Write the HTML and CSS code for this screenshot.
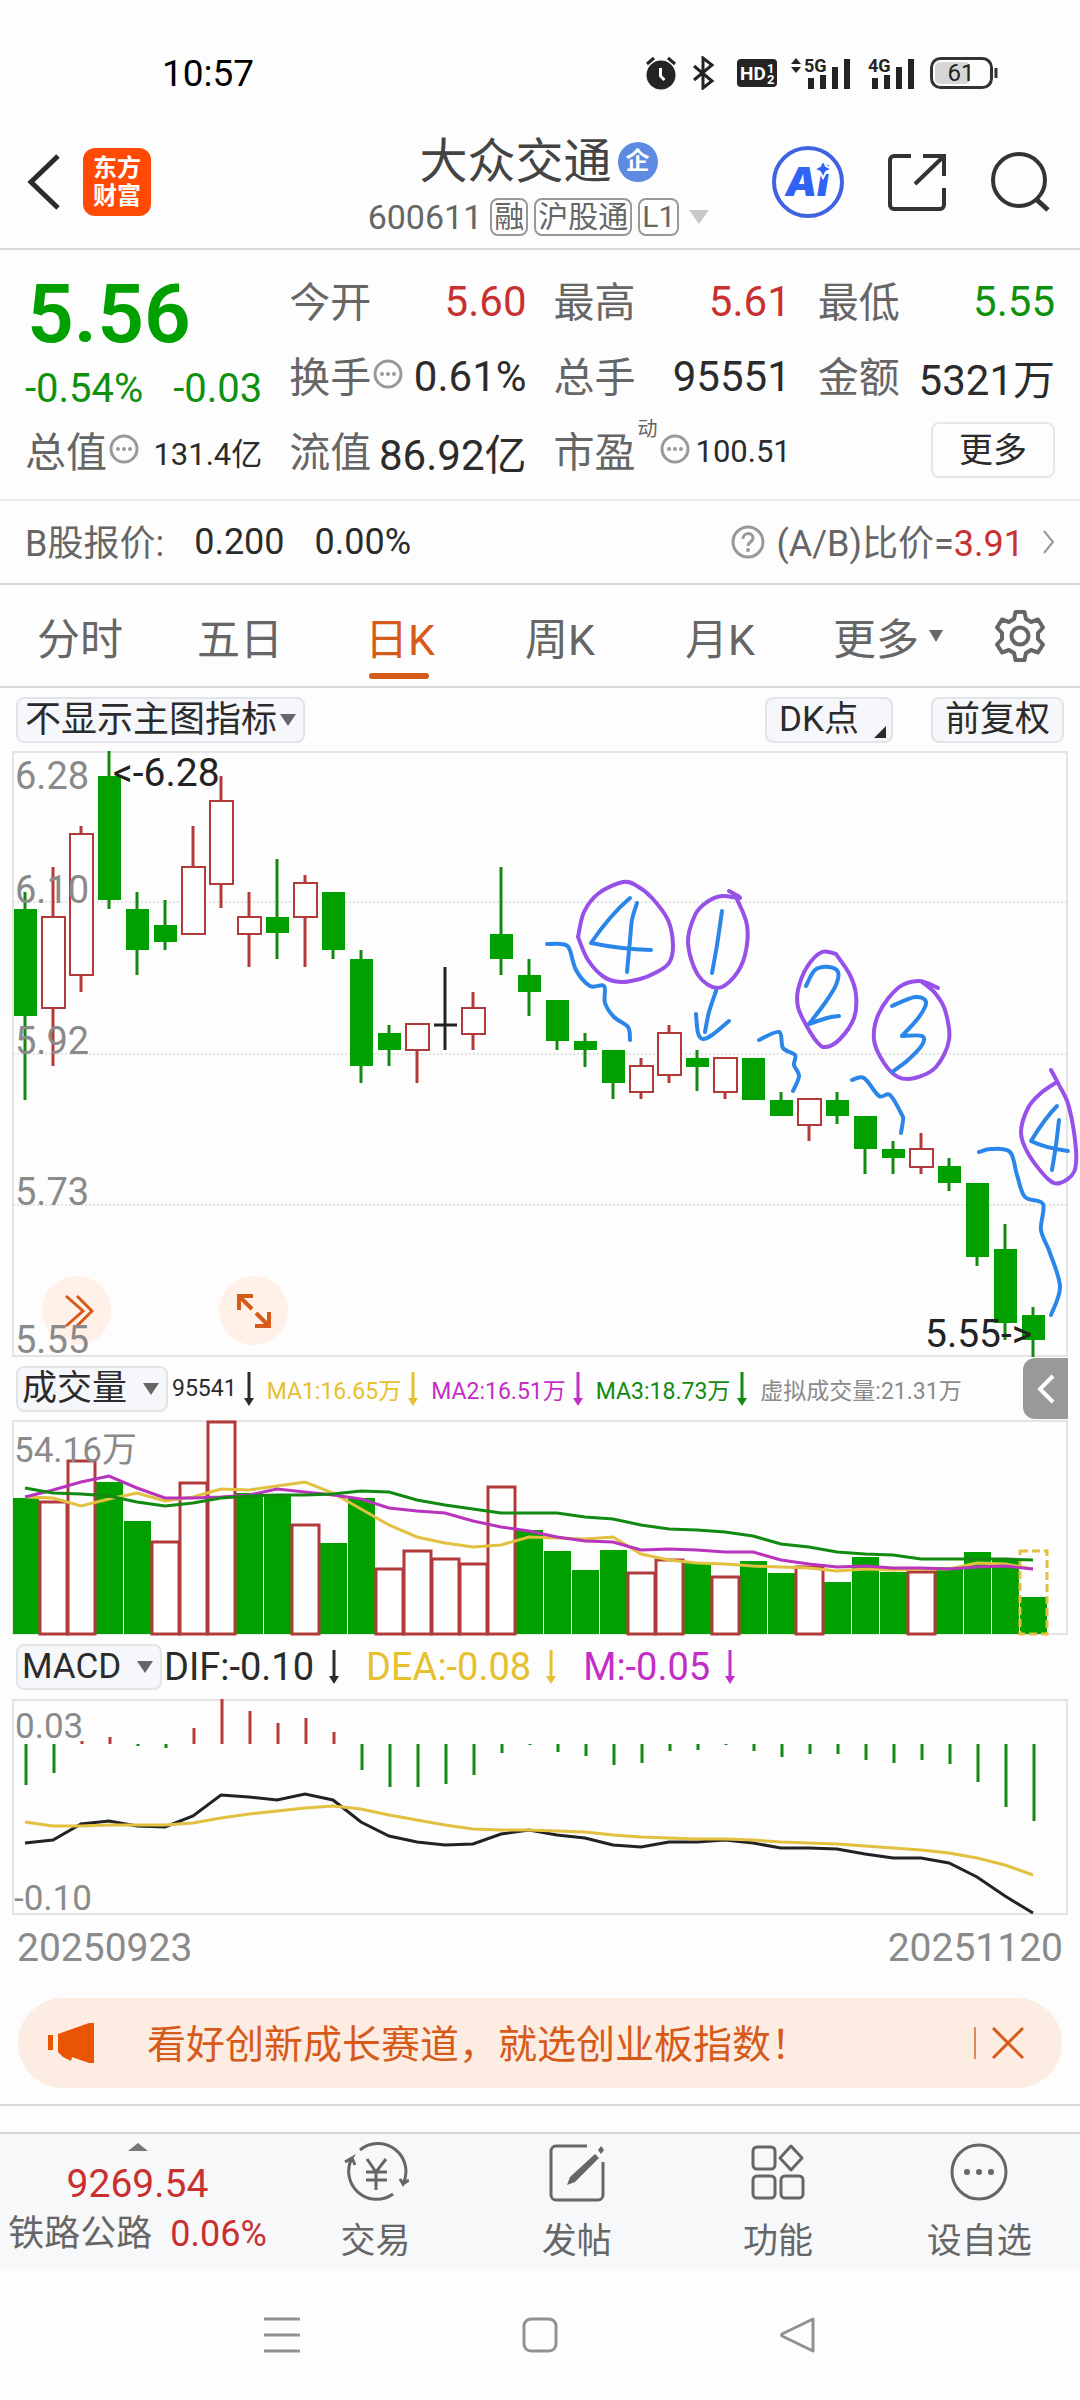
FILE: index.html
```html
<!DOCTYPE html>
<html lang="zh-CN">
<head>
<meta charset="utf-8">
<meta name="viewport" content="width=device-width, initial-scale=1">
<title>大众交通 600611</title>
<link rel="stylesheet" href="styles.css">
</head>
<body>
<div class="status">
  <time class="clock">10:57</time>
  <div class="status-icons">
    <svg class="i-alarm" viewBox="0 0 32 34" width="32" height="34"><circle cx="16" cy="19" r="14.500" fill="#242424"/><path d="M2 8 9 2M30 8 23 2" stroke="#242424" stroke-width="3"/><path d="M15.500 12v8l4 4" fill="none" stroke="#fff" stroke-width="3"/></svg>
    <svg class="i-bt" viewBox="0 0 24 34" width="24" height="34"><path d="M2 10 20 25 11 32V2l9 7L2 24" fill="none" stroke="#242424" stroke-width="3"/></svg>
    <svg class="i-hd" viewBox="0 0 40 28" width="40" height="28"><rect width="40" height="28" rx="4" fill="#242424"/><g fill="#fff" font-weight="700"><text x="3" y="21" font-size="19">HD</text><text x="30" y="14" font-size="13">1</text><text x="30" y="25" font-size="13">2</text></g></svg>
    <svg class="i-sig" viewBox="0 0 62 38" width="62" height="38"><path d="m0 10 5-6 5 6zM0 13l5 6 5-6z" fill="#242424"/><text x="13" y="18" font-size="18" font-weight="700" fill="#242424">5G</text><path d="M20 24v11M32 21v14M44 13v22M56 5v30" stroke="#242424" stroke-width="6"/></svg>
    <svg class="i-sig2" viewBox="0 0 47 38" width="47" height="38"><text x="0" y="18" font-size="18" font-weight="700" fill="#242424">4G</text><path d="M7 24v11M19 21v14M31 13v22M43 5v30" stroke="#242424" stroke-width="6"/></svg>
    <svg class="i-bat" viewBox="0 0 68 32" width="68" height="32"><rect x="5" y="5" width="35" height="22" rx="5" fill="#d6d6d6"/><rect x="1.500" y="1.500" width="60" height="29" rx="9" fill="none" stroke="#333" stroke-width="3"/><path d="M66 11v10" stroke="#333" stroke-width="3"/><text x="31" y="24" font-size="24" text-anchor="middle" fill="#242424">61</text></svg>
  </div>
</div>

<header class="header">
  <div class="header-left">
    <button class="bare" aria-label="返回"><svg viewBox="0 0 34 56" width="34" height="56"><path d="M31 2 4 28l27 26" fill="none" stroke="#2b2b2b" stroke-width="5"/></svg></button>
    <a class="logo" href="#home">东方<br>财富</a>
  </div>
  <div class="title-box">
    <h1 class="title">大众交通<span class="qi">企</span></h1>
    <div class="code"><span class="code-num">600611</span><span class="tag">融</span><span class="tag">沪股通</span><span class="tag">L1</span><span class="tri tri-light"></span></div>
  </div>
  <div class="header-right">
    <button class="bare"><svg viewBox="0 0 72 72" width="72" height="72"><circle cx="36" cy="36" r="34" fill="#fff" stroke="#3f63e0" stroke-width="4"/><text class="ai" x="35" y="50" text-anchor="middle">Ai</text><path d="m51 14 3 6 6 3-6 3-3 6-3-6-6-3 6-3z" fill="#2f62f5" stroke="#fff" stroke-width="2"/></svg></button>
    <button class="bare" aria-label="分享"><svg viewBox="0 0 58 58" width="58" height="58"><path d="M23 3H6a4 4 0 0 0-4 4v45a4 4 0 0 0 4 4h46a4 4 0 0 0 4-4V35M35 3h21v20M55 4 27 31" fill="none" stroke="#333" stroke-width="4"/></svg></button>
    <button class="bare" aria-label="搜索"><svg viewBox="0 0 60 60" width="60" height="60"><circle cx="29" cy="28" r="26" fill="none" stroke="#333" stroke-width="4"/><path d="m46 47 12 11" stroke="#333" stroke-width="5"/></svg></button>
  </div>
</header>

<main>
<section class="quote">
  <div class="price-box">
    <strong class="price">5.56</strong>
    <div class="change"><span>-0.54%</span><span>-0.03</span></div>
  </div>
  <div class="cell"><span class="k">今开</span><span class="v up">5.60</span></div>
  <div class="cell"><span class="k">最高</span><span class="v up">5.61</span></div>
  <div class="cell"><span class="k">最低</span><span class="v down">5.55</span></div>
  <div class="cell"><span class="k">换手<svg class="dots" viewBox="0 0 30 30"><use href="#dots"/></svg></span><span class="v">0.61%</span></div>
  <div class="cell"><span class="k">总手</span><span class="v">95551</span></div>
  <div class="cell"><span class="k">金额</span><span class="v">5321万</span></div>
  <div class="cell"><span class="k">总值<svg class="dots" viewBox="0 0 30 30"><use href="#dots"/></svg></span><span class="v small">131.4亿</span></div>
  <div class="cell"><span class="k">流值</span><span class="v">86.92亿</span></div>
  <div class="cell"><span class="k">市盈<sup>动</sup><svg class="dots" viewBox="0 0 30 30"><use href="#dots"/></svg></span><span class="v small">100.51</span></div>
  <div class="cell cell-end"><button class="more">更多</button></div>
</section>

<section class="bshare">
  <span class="k2">B股报价:</span><span>0.200</span><span>0.00%</span>
  <a class="ratio" href="#ratio"><svg viewBox="0 0 34 34" width="34" height="34"><circle cx="17" cy="17" r="15" fill="none" stroke="#999" stroke-width="3"/><path d="M12 14c0-7 10-7 10-1 0 4-5 4-5 8" fill="none" stroke="#999" stroke-width="3"/><circle cx="17" cy="25" r="2" fill="#999"/></svg><span class="ratio-text">(A/B)比价=<b class="up">3.91</b></span><svg viewBox="0 0 12 24" width="12" height="24"><path d="m1 1 9 11-9 11" fill="none" stroke="#999" stroke-width="2"/></svg></a>
</section>

<nav class="tabs">
  <button class="tab">分时</button>
  <button class="tab">五日</button>
  <button class="tab active">日K</button>
  <button class="tab">周K</button>
  <button class="tab">月K</button>
  <button class="tab tab-more">更多<span class="tri"></span></button>
  <button class="gear" aria-label="设置"><svg viewBox="0 0 52 52" width="52" height="52"><path d="M21.500 2h9l1.500 7 5 3 7-2.500 5 8L44 23v6l5 5.500-5 8-7-2.500-5 3-1.500 7h-9L20 43l-5-3-7 2.500-5-8L8 29v-6l-5-5.500 5-8 7 2.500 5-3z" fill="none" stroke="#666" stroke-width="4" stroke-linejoin="round"/><circle cx="26" cy="26" r="8.500" fill="none" stroke="#666" stroke-width="4"/></svg></button>
</nav>

<section class="charts">
  <div class="chart-bar chart-tools">
    <span class="chip chip-tight"><select aria-label="主图指标"><option>不显示主图指标</option></select></span>
    <span class="spacer"></span>
    <button class="chip-btn dk">DK点</button>
    <button class="chip-btn">前复权</button>
  </div>
  <div class="kline">
    <button class="round round-a" aria-label="展开"><svg viewBox="0 0 30 34" width="30" height="34"><path d="m2 2 17 15L2 32M13 2l15 15-15 15" fill="none" stroke="#d65a1a" stroke-width="3"/></svg></button>
    <button class="round round-b" aria-label="全屏"><svg viewBox="0 0 34 34" width="34" height="34"><path d="M2 16V2h14M2 2l13 13M32 18v14H18M32 32 19 19" fill="none" stroke="#d65a1a" stroke-width="4"/></svg></button>
    <svg id="kline" class="chart" viewBox="0 751 1080 606"></svg>
  </div>
  <div class="chart-bar vol-bar">
    <span class="chip"><select aria-label="副图指标一"><option>成交量</option></select></span>
    <ul class="vals vals-small">
      <li>95541<svg class="arr"><use href="#arr"/></svg></li>
      <li class="gold">MA1:16.65万<svg class="arr"><use href="#arr"/></svg></li>
      <li class="purple">MA2:16.51万<svg class="arr"><use href="#arr"/></svg></li>
      <li class="green">MA3:18.73万<svg class="arr"><use href="#arr"/></svg></li>
      <li class="grey">虚拟成交量:21.31万</li>
    </ul>
    <button class="fold" aria-label="收起"><svg viewBox="0 0 18 30" width="18" height="30"><path d="M16 2 3 15l13 13" fill="none" stroke="#fff" stroke-width="4"/></svg></button>
  </div>
  <svg id="volume" class="chart" viewBox="0 1420 1080 215"></svg>
  <div class="chart-bar macd-bar">
    <span class="chip"><select aria-label="副图指标二"><option>MACD</option></select></span>
    <ul class="vals vals-large">
      <li>DIF:-0.10<svg class="arr"><use href="#arr"/></svg></li>
      <li class="gold">DEA:-0.08<svg class="arr"><use href="#arr"/></svg></li>
      <li class="purple">M:-0.05<svg class="arr"><use href="#arr"/></svg></li>
    </ul>
  </div>
  <svg id="macd" class="chart" viewBox="0 1699 1080 216"></svg>
  <div class="dates"><time>20250923</time><time>20251120</time></div>
</section>

<aside class="banner">
  <svg viewBox="0 0 46 40" width="46" height="40"><path d="M10 11 41 0h5v40h-5l-17-6-1 4-8-4-5-5zM0 12h5v15H0z" fill="#ea5504"/></svg>
  <a href="#promo">看好创新成长赛道，就选创业板指数！</a>
  <button class="bare close" aria-label="关闭"><svg viewBox="0 0 32 32" width="32" height="32"><path d="m1 1 30 30M31 1 1 31" stroke="#d65a1a" stroke-width="3"/></svg></button>
</aside>
</main>

<footer class="bottom">
  <a class="index" href="#index"><span class="tri-up"></span><span class="index-num">9269.54</span><span class="index-row"><span>铁路公路</span><span class="up">0.06%</span></span></a>
  <a class="item" href="#trade"><svg viewBox="0 0 66 60" width="66" height="60" fill="none" stroke="#666" stroke-width="3"><path d="M17 8a28 28 0 0 1 43 34l-3-5m3 5 6-4M50 52A28 28 0 0 1 9 16l-7 4m7-4 3 7"/><path d="m24 17 9 13 10-13M23 30h21M23 38h21M33 30v18"/></svg><span>交易</span></a>
  <a class="item" href="#post"><svg viewBox="0 0 56 60" width="56" height="60"><path d="M38 4H7a5 5 0 0 0-5 5v44a5 5 0 0 0 5 5h42a5 5 0 0 0 5-5V20" fill="none" stroke="#666" stroke-width="3"/><path d="m46 12 4 4-24 24-8 3 3-8zM49 8l3-4 3 4-3 4z" fill="#666"/></svg><span>发帖</span></a>
  <a class="item" href="#tools"><svg viewBox="0 0 56 60" width="56" height="60" fill="none" stroke="#666" stroke-width="3"><rect x="3" y="5" width="22" height="22" rx="4"/><rect x="3" y="34" width="22" height="22" rx="4"/><rect x="31" y="34" width="22" height="22" rx="4"/><path d="m41 4 11 12-11 12-11-12z" stroke-linejoin="round"/></svg><span>功能</span></a>
  <a class="item" href="#watch"><svg viewBox="0 0 60 60" width="60" height="60"><circle cx="30" cy="30" r="27" fill="none" stroke="#666" stroke-width="3"/><g fill="#666"><circle cx="18" cy="30" r="3"/><circle cx="30" cy="30" r="3"/><circle cx="42" cy="30" r="3"/></g></svg><span>设自选</span></a>
</footer>

<div class="sysnav">
  <button class="bare" aria-label="最近任务"><svg viewBox="0 0 36 36" width="36" height="36"><path d="M0 2h36M0 18h36M0 34h36" stroke="#919191" stroke-width="3"/></svg></button>
  <button class="bare" aria-label="主屏幕"><svg viewBox="0 0 36 36" width="36" height="36"><rect x="2" y="2" width="32" height="32" rx="7" fill="none" stroke="#919191" stroke-width="3"/></svg></button>
  <button class="bare" aria-label="后退"><svg viewBox="0 0 36 36" width="36" height="36"><path d="M33 2v32L2 19q-1-1 0-2z" fill="none" stroke="#919191" stroke-width="3" stroke-linejoin="round"/></svg></button>
</div>

<svg class="defs" width="0" height="0" aria-hidden="true">
  <symbol id="dots" viewBox="0 0 30 30"><circle cx="15" cy="15" r="13" fill="none" stroke="#999" stroke-width="3"/><g fill="#999"><circle cx="9" cy="15" r="2"/><circle cx="15" cy="15" r="2"/><circle cx="21" cy="15" r="2"/></g></symbol>
  <symbol id="arr" viewBox="0 0 12 34"><path d="M6 0v30" stroke="currentColor" stroke-width="3"/><path d="m1 26 10 0-5 8z" fill="currentColor"/></symbol>
</svg>
<script src="charts.js"></script>
</body>
</html>
```
FILE: styles.css
```css
* { box-sizing: border-box; }
body {
  margin: 0;
  background: #fdfdfd;
  color: #2b2b2b;
  font-family: Roboto, "Noto Sans CJK SC", sans-serif;
  font-size: 36px;
}
button, select { font: inherit; color: inherit; margin: 0; border: 0; background: none; padding: 0; cursor: pointer; }
a { color: inherit; text-decoration: none; }
svg { display: block; flex: none; }
.defs { position: absolute; }
.up { color: #c93030; font-weight: 400; }
.down { color: #0f910f; }

.status { display: flex; justify-content: space-between; align-items: center; height: 110px; padding: 36px 82px 0 162px; }
.clock { font-size: 37px; color: #000; }
.status-icons { display: flex; align-items: center; }
.i-bt { margin-left: 15px; }
.i-hd { margin-left: 21px; }
.i-sig { margin-left: 14px; }
.i-sig2 { margin-left: 15px; }
.i-bat { margin-left: 15px; }

.header { display: grid; grid-template-columns: 1fr auto 1fr; align-items: center; height: 140px; border-bottom: 2px solid #d8d8d8; padding: 6px 30px 0 27px; }
.header-left { display: flex; align-items: center; gap: 22px; }
.logo { width: 68px; height: 68px; border-radius: 12px; background: #ff4a05; color: #fff; font-size: 24px; line-height: 28px; font-weight: 700; text-align: center; padding-top: 6px; }
.title-box { display: flex; flex-direction: column; align-items: center; padding-top: 14px; }
.title { margin: 0; display: flex; align-items: center; gap: 6px; font-size: 48px; line-height: 56px; font-weight: 400; color: #444; }
.qi { width: 40px; height: 40px; border-radius: 50%; background: #5f8ae2; color: #fff; font-size: 24px; line-height: 38px; text-align: center; font-weight: 700; }
.code { display: flex; align-items: center; gap: 6px; height: 54px; font-size: 34px; color: #666; }
.code-num { margin-right: 2px; }
.tag { border: 2px solid #999; border-radius: 8px; height: 38px; padding: 0 2px; font-size: 30px; line-height: 34px; }
.tri { display: inline-block; border: 7px solid transparent; border-top: 12px solid #666; border-bottom: 0; }
.tri-light { border-width: 14px 10px 0; border-top-color: #c8c8c8; margin-left: 4px; }
.header-right { display: flex; align-items: center; justify-content: flex-end; gap: 44px; }
.ai { font-family: Inter, Roboto, sans-serif; font-size: 40px; font-weight: 900; font-style: italic; fill: #2f62f5; }

.quote { display: grid; grid-template-columns: repeat(4, minmax(0, 1fr)); grid-auto-rows: 75px; column-gap: 27px; padding: 14px 25px 10px; border-bottom: 2px solid #ececec; font-size: 42px; }
.price-box { grid-row: span 2; color: #00a000; padding-top: 3px; }
.price { display: block; font-size: 82px; line-height: 94px; font-weight: 600; padding-left: 2px; }
.change { display: flex; justify-content: space-between; font-size: 40px; line-height: 56px; color: #0f910f; }
.cell { display: flex; justify-content: space-between; align-items: center; white-space: nowrap; }
.cell-end { justify-content: flex-end; padding-bottom: 4px; }
.k { display: flex; align-items: center; gap: 2px; color: #666; font-size: 41px; padding-bottom: 6px; }
.k sup { font-size: 20px; line-height: 20px; align-self: flex-start; color: #666; }
.dots { width: 30px; height: 30px; }
.small { font-size: 31px; }
.more { width: 124px; height: 56px; border: 2px solid #e6e7ea; border-radius: 8px; font-size: 34px; line-height: 50px; }

.bshare { display: flex; align-items: center; height: 84px; border-bottom: 2px solid #d8d8d8; padding: 0 25px; font-size: 36px; gap: 30px; }
.k2, .ratio { color: #666; }
.k2, .ratio-text { padding-bottom: 4px; }
.ratio { margin-left: auto; display: flex; align-items: center; gap: 11px; }
.ratio svg:last-child { margin-left: 8px; }

.tabs { display: grid; grid-template-columns: repeat(6, 4fr) 3fr; height: 103px; border-bottom: 2px solid #d8d8d8; }
.tab { position: relative; display: flex; align-items: center; justify-content: center; gap: 10px; font-size: 43px; color: #666; }
.tab-more { padding-left: 16px; }
.tab.active { color: #d65a1a; }
.tab.active::after { content: ""; position: absolute; left: calc(50% - 31px); bottom: 7px; width: 60px; height: 6px; border-radius: 3px; background: #d65a1a; }
.gear { display: flex; align-items: center; justify-content: center; }

.chart-bar { display: flex; align-items: center; padding: 0 12px 0 16px; height: 64px; }
.chart-tools { padding: 0 16px; height: 63px; }
.vol-bar { height: 63px; }
.spacer { flex: 1; }
.chip { position: relative; }
.chip select { appearance: none; height: 46px; padding: 0 38px 0 4px; border: 2px solid #e2e4e8; border-radius: 8px; background: #f6f7fa; font-size: 35px; line-height: 40px; }
.chip-tight select { padding: 0 25px 0 7px; font-size: 36px; }
.chip::after { content: ""; position: absolute; right: 9px; top: 17px; border: 8px solid transparent; border-top: 12px solid #666; border-bottom: 0; }
.chip-btn { height: 46px; padding: 0 12px; border: 2px solid #e2e4e8; border-radius: 8px; background: #f6f7fa; font-size: 35px; line-height: 40px; margin-left: 38px; }
.dk { position: relative; padding-right: 32px; }
.dk::after { content: ""; position: absolute; right: 5px; bottom: 3px; border-left: 12px solid transparent; border-bottom: 12px solid #2b2b2b; }
.chart { width: 100%; height: auto; overflow: visible; }
.chart .axis { font-size: 38px; fill: #8a8a8a; }
.chart .axis-small { font-size: 35px; fill: #8a8a8a; }
.chart .mark { font-size: 39px; fill: #222; }
.kline { position: relative; }
.kline .chart { position: relative; pointer-events: none; }
.round { position: absolute; bottom: 12px; width: 69px; height: 69px; border-radius: 50%; background: #fff0e8; display: flex; align-items: center; justify-content: center; }
.round-a { left: 42px; padding-left: 4px; }
.round-b { left: 219px; }
.vals { display: flex; align-items: center; list-style: none; margin: 0; padding: 0; white-space: nowrap; }
.vals li { display: flex; align-items: center; }
.arr { width: 12px; height: 34px; }
.vals-small { font-size: 23px; gap: 12px; margin-left: 4px; }
.vals-small li { gap: 6px; }
.vals-large { font-size: 38px; gap: 26px; margin-left: 2px; }
.vals-large li { gap: 14px; }
.gold { color: #e6c02e; }
.purple { color: #c22fc6; }
.green { color: #128a12; }
.grey { color: #8a8a8a; }
.fold { margin-left: auto; width: 45px; height: 61px; border-radius: 12px 0 0 12px; background: #999; display: flex; align-items: center; justify-content: center; }
.dates { display: flex; justify-content: space-between; padding: 10px 17px 0; height: 83px; font-size: 39px; line-height: 46px; color: #8a8a8a; }

.banner { display: flex; align-items: center; height: 90px; margin: 0 18px; padding: 0 38px 0 30px; border-radius: 45px; background: #fcece2; color: #d65a1a; font-size: 39px; }
.banner a { margin-left: 53px; padding-bottom: 5px; white-space: nowrap; }
.close { margin-left: auto; padding-left: 16px; border-left: 2px solid #d98a60; }
main { padding-bottom: 16px; border-bottom: 2px solid #d8d8d8; }

.bottom { display: grid; grid-template-columns: 275px repeat(4, minmax(0, 1fr)); margin-top: 26px; height: 137px; background: #f7f8fa; border-top: 2px solid #d4d6da; color: #666; }
.index { display: flex; flex-direction: column; align-items: center; padding-top: 9px; font-size: 36px; }
.tri-up { border: 10px solid transparent; border-bottom: 8px solid #777; border-top: 0; }
.index-num { margin-top: 11px; font-size: 39px; line-height: 44px; color: #c93030; }
.index-row { display: flex; gap: 18px; line-height: 56px; white-space: nowrap; }
.item { display: flex; flex-direction: column; align-items: center; padding-top: 8px; gap: 16px; font-size: 35px; line-height: 48px; }
.sysnav { display: flex; justify-content: center; gap: 222px; padding: 48px 0; height: 132px; }
```
FILE: charts.js
```js
const NS = "http://www.w3.org/2000/svg";
const GREEN = "#00a000", WICK = "#128a12", RED = "#b23a3a", GOLD = "#e2c040", PURPLE = "#b834bc";
const cx = i => 25 + 28 * i;

function add(svg, name, attrs, text) {
  const el = document.createElementNS(NS, name);
  for (const k in attrs) el.setAttribute(k, attrs[k]);
  if (text) el.textContent = text;
  svg.appendChild(el);
}
function line(svg, x1, y1, x2, y2, stroke, w = 3, more = {}) {
  add(svg, "path", { d: `M${x1} ${y1}L${x2} ${y2}`, stroke, "stroke-width": w, fill: "none", ...more });
}
function series(svg, ys, stroke) {
  add(svg, "polyline", { points: ys.map((y, i) => `${cx(i)},${y}`).join(" "), fill: "none", stroke, "stroke-width": 3 });
}
function frame(svg, y, h) {
  add(svg, "rect", { x: 13, y: y + 1, width: 1054, height: h - 2, fill: "none", stroke: "#e4e4e4", "stroke-width": 2 });
}
function label(svg, x, y, text, cls = "axis") {
  add(svg, "text", { x, y, class: cls }, text);
}
// Freehand stroke: a smooth curve through the given points
function pen(svg, pts, stroke, width = 4) {
  let d = `M${pts[0]}`;
  for (let i = 0; i < pts.length - 1; i++) {
    const p0 = pts[i - 1] || pts[i], p1 = pts[i], p2 = pts[i + 1], p3 = pts[i + 2] || p2;
    d += `C${p1[0] + (p2[0] - p0[0]) / 6} ${p1[1] + (p2[1] - p0[1]) / 6} ${p2[0] - (p3[0] - p1[0]) / 6} ${p2[1] - (p3[1] - p1[1]) / 6} ${p2}`;
  }
  add(svg, "path", { d, fill: "none", stroke, "stroke-width": width, "stroke-linecap": "round", "stroke-linejoin": "round" });
}

// Candles: kind, high, body top, body bottom, low
const candles = [
  ["g",892,909,1016,1100],["r",867,917,1008,1066],["r",826,834,975,992],["g",751,776,900,909],
  ["g",892,909,950,975],["g",900,925,942,950],["r",826,867,934,934],["r",776,801,884,908],
  ["r",892,917,934,967],["g",859,917,933,959],["r",875,883,917,967],["g",892,892,950,959],
  ["g",950,959,1066,1083],["g",1025,1033,1050,1066],["r",1024,1024,1050,1083],["k",967,1025,1025,1050],
  ["r",992,1008,1034,1050],["g",867,934,959,975],["g",959,975,992,1016],["g",1000,1000,1041,1050],
  ["g",1033,1041,1050,1067],["g",1050,1050,1083,1099],["r",1058,1066,1092,1099],["r",1025,1033,1075,1083],
  ["g",1050,1058,1067,1091],["r",1058,1058,1092,1099],["g",1058,1058,1100,1100],["g",1092,1100,1116,1116],
  ["r",1099,1099,1125,1141],["g",1092,1100,1116,1124],["g",1116,1116,1149,1174],["g",1141,1149,1158,1174],
  ["r",1133,1149,1167,1174],["g",1158,1166,1183,1191],["g",1183,1183,1257,1266],["g",1224,1249,1323,1340],
  ["g",1307,1315,1340,1357]
];

const k = document.getElementById("kline");
frame(k, 751, 606);
[902, 1054, 1205].forEach(y => line(k, 13, y, 1067, y, "#c8c8c8", 1, { "stroke-dasharray": "2 2" }));
[["6.28", 789], ["6.10", 903], ["5.92", 1054], ["5.73", 1205], ["5.55", 1353]].forEach(([t, y]) => label(k, 15, y, t));
candles.forEach(([kind, hi, top, bot, lo], i) => {
  const x = cx(i);
  if (kind === "k") {
    line(k, x, hi, x, lo, "#222");
    line(k, x - 11, top, x + 12, top, "#222");
  } else if (kind === "g") {
    line(k, x, hi, x, lo, WICK);
    add(k, "rect", { x: x - 11, y: top, width: 23, height: bot - top, fill: GREEN });
  } else {
    line(k, x, hi, x, top, RED);
    line(k, x, bot, x, lo, RED);
    add(k, "rect", { x: x - 11, y: top, width: 23, height: bot - top, fill: "#fff", stroke: RED, "stroke-width": 2 });
  }
});
[["6.10", 903], ["5.92", 1054]].forEach(([t, y]) => {
  k.lastChild.after(...[...k.querySelectorAll("text")].filter(el => el.textContent === t));
});
label(k, 113, 786, "<-6.28", "mark");
label(k, 925, 1347, "5.55->", "mark");

const BLUE = "#2b86ea", VIOLET = "#9750e8";
[
  [[578,937],[584,912],[599,893],[623,882],[637,886],[652,898],[668,920],[673,945],[669,963],[655,973],[640,979],[621,982],[604,977],[588,960],[578,937]],
  [[729,891],[740,898],[722,896],[707,902],[695,915],[688,943],[698,975],[717,988],[734,977],[745,955],[747,925],[736,897]],
  [[836,954],[822,952],[807,967],[798,990],[798,1007],[805,1023],[817,1042],[826,1047],[840,1039],[854,1018],[856,995],[850,975],[836,954]],
  [[938,988],[919,981],[898,988],[879,1013],[874,1040],[884,1063],[898,1077],[915,1078],[936,1067],[949,1040],[945,1010],[935,993],[922,982]],
  [[1051,1070],[1059,1085],[1069,1107],[1076,1150],[1074,1172],[1060,1183],[1048,1179],[1029,1155],[1021,1133],[1028,1108],[1041,1093],[1057,1082]]
].forEach(p => pen(k, p, VIOLET));
[
  [[547,944],[561,944],[569,948],[576,970],[590,986],[604,986],[605,1003],[614,1017],[628,1027],[630,1040]],
  [[637,903],[632,920],[630,940],[627,972]],
  [[722,911],[717,945],[712,973]],
  [[716,991],[709,1012],[705,1032]],
  [[696,1014],[698,1033],[703,1039],[712,1035],[729,1021]],
  [[806,986],[815,970],[829,967],[838,972],[836,985],[825,1003],[809,1024]],
  [[809,1024],[827,1018],[839,1016]],
  [[759,1040],[779,1032],[783,1048],[795,1055],[794,1065],[799,1076],[793,1091]],
  [[892,1006],[915,997],[926,1002],[919,1017],[902,1036]],
  [[902,1036],[922,1036],[922,1045],[908,1060],[892,1072]],
  [[852,1080],[864,1078],[879,1096],[890,1095],[902,1115],[903,1120],[901,1133]],
  [[1059,1120],[1056,1145],[1052,1170]],
  [[979,1152],[991,1149],[1010,1152],[1017,1175],[1025,1197],[1043,1204],[1041,1230],[1050,1253],[1060,1287],[1051,1315]]
].forEach(p => pen(k, p, BLUE));
["M630 898Q610 915 591 943Q620 949 651 950", "M1057 1106Q1045 1118 1031 1141Q1045 1148 1068 1151"].forEach(d =>
  add(k, "path", { d, fill: "none", stroke: BLUE, "stroke-width": 4, "stroke-linecap": "round", "stroke-linejoin": "round" }));

const volTops = [1498,1501,1460,1482,1521,1541,1482,1421,1493,1494,1524,1543,1498,1568,1550,1558,1563,1486,1530,1551,1570,1550,1572,1559,1563,1576,1561,1573,1566,1582,1557,1572,1571,1567,1552,1560,1597];
const volRed = new Set([1,2,5,6,7,10,13,14,15,16,17,22,23,25,28,32]);
const v = document.getElementById("volume");
frame(v, 1420, 215);
volTops.forEach((y, i) => {
  const x = Math.max(cx(i) - 13, 13);
  if (!volRed.has(i)) add(v, "rect", { x, y, width: cx(i) + 14 - x, height: 1634 - y, fill: GREEN });
});
volTops.forEach((y, i) => {
  if (volRed.has(i)) add(v, "rect", { x: cx(i) - 13, y: y + 1, width: 27, height: 1633 - y, fill: "#fff", stroke: RED, "stroke-width": 3 });
});
add(v, "rect", { x: 1020, y: 1551, width: 27, height: 83, fill: "none", stroke: GOLD, "stroke-width": 3, "stroke-dasharray": "8 4" });
series(v, [1497,1498,1506,1499,1493,1501,1497,1489,1490,1486,1482,1493,1509,1525,1537,1543,1547,1545,1537,1538,1539,1537,1554,1560,1563,1564,1566,1567,1568,1571,1569,1570,1569,1569,1563,1564,1569], GOLD);
series(v, [1497,1490,1482,1476,1488,1498,1498,1497,1495,1489,1492,1495,1499,1508,1511,1513,1521,1527,1531,1537,1541,1542,1550,1549,1550,1552,1552,1560,1564,1567,1566,1568,1568,1569,1567,1566,1569], PURPLE);
series(v, [1488,1493,1494,1496,1502,1506,1503,1498,1496,1495,1495,1494,1491,1492,1500,1505,1509,1513,1513,1513,1517,1519,1525,1529,1530,1532,1536,1544,1547,1552,1554,1555,1559,1559,1559,1559,1560], WICK);
label(v, 14, 1462, "54.16万", "axis-small");

const m = document.getElementById("macd");
frame(m, 1699, 216);
[1785,1773,1741,1737,1746,1748,1728,1699,1711,1723,1718,1732,1770,1787,1787,1784,1775,1753,1745,1752,1756,1765,1763,1751,1750,1745,1751,1757,1754,1754,1760,1763,1760,1764,1782,1807,1821]
  .forEach((y, i) => line(m, cx(i) + 1, 1744, cx(i) + 1, y, y < 1744 ? RED : WICK));
series(m, [1843,1840,1824,1821,1826,1827,1816,1795,1797,1800,1794,1800,1822,1836,1842,1845,1844,1834,1830,1835,1838,1845,1847,1842,1842,1840,1843,1848,1848,1849,1854,1858,1858,1863,1877,1896,1913], "#222");
series(m, [1822,1826,1826,1825,1825,1825,1823,1818,1814,1811,1808,1806,1809,1815,1820,1825,1829,1830,1830,1831,1832,1835,1837,1838,1839,1839,1840,1842,1843,1844,1846,1848,1850,1853,1858,1865,1875], GOLD);
label(m, 15, 1738, "0.03", "axis-small");
label(m, 14, 1910, "-0.10", "axis-small");
```
